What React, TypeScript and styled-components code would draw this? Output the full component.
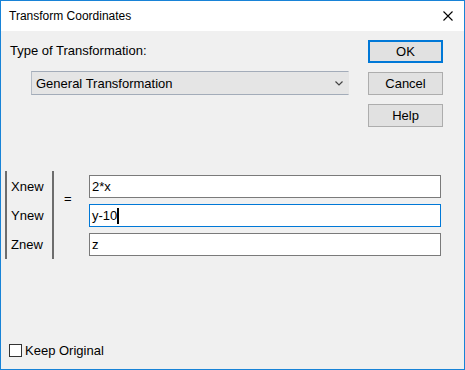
import { FC } from "react";
import styled, { createGlobalStyle } from "styled-components";

const GlobalStyle = createGlobalStyle`
  html, body {
    margin: 0;
    padding: 0;
    background: #ffffff;
  }
  * {
    box-sizing: border-box;
  }
`;

const Window = styled.div`
  width: 465px;
  height: 370px;
  border: 1px solid #1883d7;
  display: flex;
  flex-direction: column;
  background: #f0f0f0;
  font-family: "Liberation Sans", Arial, sans-serif;
  font-size: 13px;
  color: #000;
`;

const TitleBar = styled.div`
  height: 30px;
  background: #ffffff;
  display: flex;
  align-items: center;
  justify-content: space-between;
  padding: 0 11px 0 8px;
`;

const Title = styled.span`
  font-family: "Liberation Sans", Arial, sans-serif;
  font-size: 12px;
  color: #000;
`;

const Body = styled.div`
  flex: 1;
  display: flex;
  flex-direction: column;
  padding: 9px 21px 11px 4px;
`;

const TopRow = styled.div`
  display: flex;
  justify-content: space-between;
`;

const TypeColumn = styled.div`
  display: flex;
  flex-direction: column;
  padding: 3px 0 0 5px;
`;

const FieldLabel = styled.div`
  line-height: 15px;
`;

const Select = styled.div`
  margin: 13px 0 0 21px;
  width: 318px;
  height: 24px;
  background: #e5e5e5;
  border-top: 1px solid #a3acb9;
  border-bottom: 1px solid #a3acb9;
  border-left: 1px solid #b5bcc6;
  border-right: 1px solid #e5e5e5;
  display: flex;
  align-items: center;
  justify-content: space-between;
  padding: 0 5px 0 4px;
`;

const ButtonColumn = styled.div`
  display: flex;
  flex-direction: column;
  gap: 9px;
`;

const Button = styled.div<{ $default?: boolean }>`
  width: 75px;
  height: 23px;
  background: #e1e1e1;
  border: ${(p) => (p.$default ? "2px solid #0078d7" : "1px solid #adadad")};
  display: flex;
  align-items: center;
  justify-content: center;
`;

const EquationRow = styled.div`
  display: flex;
  margin-top: 44px;
`;

const Matrix = styled.div`
  width: 49px;
  border-left: 2px solid #6d6d6d;
  border-right: 2px solid #6d6d6d;
  padding: 4px 0 3px 4px;
  display: flex;
  flex-direction: column;
  gap: 6px;
`;

const RowLabel = styled.div`
  height: 23px;
  display: flex;
  align-items: center;
`;

const Equals = styled.div`
  width: 35px;
  padding: 20px 0 0 10px;
`;

const Fields = styled.div`
  flex: 1;
  display: flex;
  flex-direction: column;
  gap: 6px;
  padding-top: 4px;
  margin-right: 2px;
`;

const Field = styled.div<{ $focused?: boolean }>`
  height: 23px;
  background: #fff;
  border: 1px solid ${(p) => (p.$focused ? "#0078d7" : "#7a7a7a")};
  display: flex;
  align-items: center;
  padding-left: 2px;
`;

const Caret = styled.span`
  display: inline-block;
  width: 2px;
  height: 16px;
  background: #000;
  vertical-align: middle;
`;

const Spacer = styled.div`
  flex: 1;
`;

const CheckRow = styled.div`
  display: flex;
  align-items: center;
  gap: 3px;
  padding-left: 4px;
`;

const CheckBox = styled.div`
  width: 13px;
  height: 13px;
  border: 1px solid #333;
  background: #fff;
`;

const App: FC = () => {
  return (
    <>
      <GlobalStyle />
      <Window>
        <TitleBar>
          <Title>Transform Coordinates</Title>
          <svg width="10" height="10" viewBox="0 0 10 10">
            <path d="M0.5 0.5 L9.5 9.5 M9.5 0.5 L0.5 9.5" stroke="#000" strokeWidth="1.1" />
          </svg>
        </TitleBar>
        <Body>
          <TopRow>
            <TypeColumn>
              <FieldLabel>Type of Transformation:</FieldLabel>
              <Select>
                <span>General Transformation</span>
                <svg width="8" height="5" viewBox="0 0 8 5">
                  <path d="M0.5 0.5 L4 4 L7.5 0.5" stroke="#444" strokeWidth="1.2" fill="none" />
                </svg>
              </Select>
            </TypeColumn>
            <ButtonColumn>
              <Button $default>OK</Button>
              <Button>Cancel</Button>
              <Button>Help</Button>
            </ButtonColumn>
          </TopRow>
          <EquationRow>
            <Matrix>
              <RowLabel>Xnew</RowLabel>
              <RowLabel>Ynew</RowLabel>
              <RowLabel>Znew</RowLabel>
            </Matrix>
            <Equals>=</Equals>
            <Fields>
              <Field>2*x</Field>
              <Field $focused>
                y-10
                <Caret />
              </Field>
              <Field>z</Field>
            </Fields>
          </EquationRow>
          <Spacer />
          <CheckRow>
            <CheckBox />
            <span>Keep Original</span>
          </CheckRow>
        </Body>
      </Window>
    </>
  );
};

export default App;
